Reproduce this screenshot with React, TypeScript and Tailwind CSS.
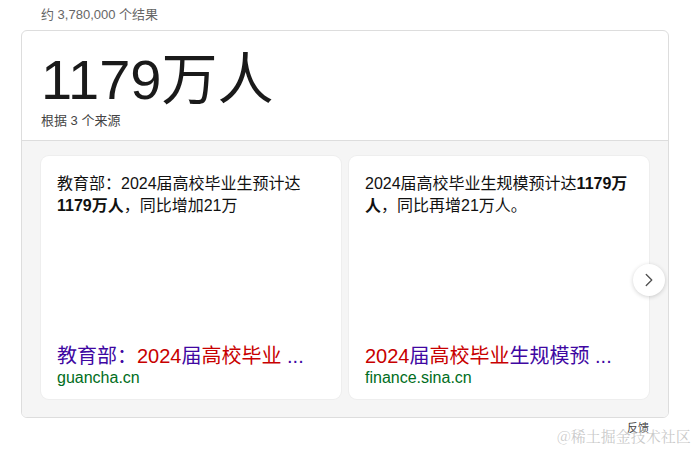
import React from 'react';
import { ChevronRight } from 'lucide-react';

const FONT = { fontFamily: 'Arial, "Liberation Sans", "Noto Sans CJK SC", sans-serif' };

type Part = { t: string; hit?: boolean };

const cards: { body: React.ReactNode; title: Part[]; site: string }[] = [
  {
    body: (
      <>
        教育部：2024届高校毕业生预计达<b>1179万人</b>，同比增加21万
      </>
    ),
    title: [
      { t: '教育部：' },
      { t: '2024', hit: true },
      { t: '届' },
      { t: '高校毕业', hit: true },
      { t: ' ...' },
    ],
    site: 'guancha.cn',
  },
  {
    body: (
      <>
        2024届高校毕业生规模预计达<b>1179万人</b>，同比再增21万人。
      </>
    ),
    title: [
      { t: '2024', hit: true },
      { t: '届' },
      { t: '高校毕业', hit: true },
      { t: '生规模预 ...' },
    ],
    site: 'finance.sina.cn',
  },
];

export default function App() {
  return (
    <div className="relative w-[693px] h-[449px] bg-white overflow-hidden" style={FONT}>
      <div className="pl-[41px] pt-[6px] h-[30px] text-[13px] leading-[18px] text-[#666]">约 3,780,000 个结果</div>

      <div className="ml-[21px] w-[648px] border border-[#dddddd] rounded-[6px] overflow-hidden">
        <div className="pl-[19px] pt-[17px] pb-[10px] border-b border-[#dddddd]">
          <div className="text-[56px] leading-[64px] text-[#1a1a1a]">1179万人</div>
          <div className="text-[13px] leading-[18px] text-[#444]">根据 3 个来源</div>
        </div>

        <div className="relative bg-[#f5f5f5] pl-[19px] pt-[15px] pb-[18px] flex gap-2">
          {cards.map((c, i) => (
            <div
              key={i}
              className="w-[300px] h-[243px] shrink-0 bg-white rounded-[8px] shadow-[0_0_0_1px_#eeeeee] px-4 pt-[17px] pb-[11px] flex flex-col justify-between"
            >
              <p className="text-[16px] leading-[22px] text-[#111]">{c.body}</p>
              <div>
                <div className="text-[20px] leading-[24px] text-[#4007a2] whitespace-nowrap">
                  {c.title.map((p, j) => (
                    <span key={j} className={p.hit ? 'text-[#c80000]' : ''}>
                      {p.t}
                    </span>
                  ))}
                </div>
                <div className="text-[16px] leading-[20px] text-[#006d21]">{c.site}</div>
              </div>
            </div>
          ))}

          <button className="absolute left-[611px] top-[123px] w-8 h-8 rounded-full bg-white shadow-[0_1px_4px_rgba(0,0,0,0.18)] flex items-center justify-center text-[#555]">
            <ChevronRight size={22} strokeWidth={1.5} />
          </button>
        </div>
      </div>

      <div className="absolute left-[627px] top-[421px] text-[11px] leading-[14px] text-[#444]">反馈</div>
      <div
        className="absolute left-[557px] top-[427px] text-[15px] leading-[18px] text-[#bbbbbb]/80"
        style={{ fontFamily: '"Noto Serif CJK SC", "Liberation Serif", "Noto Sans CJK SC", serif' }}
      >
        @稀土掘金技术社区
      </div>
    </div>
  );
}
